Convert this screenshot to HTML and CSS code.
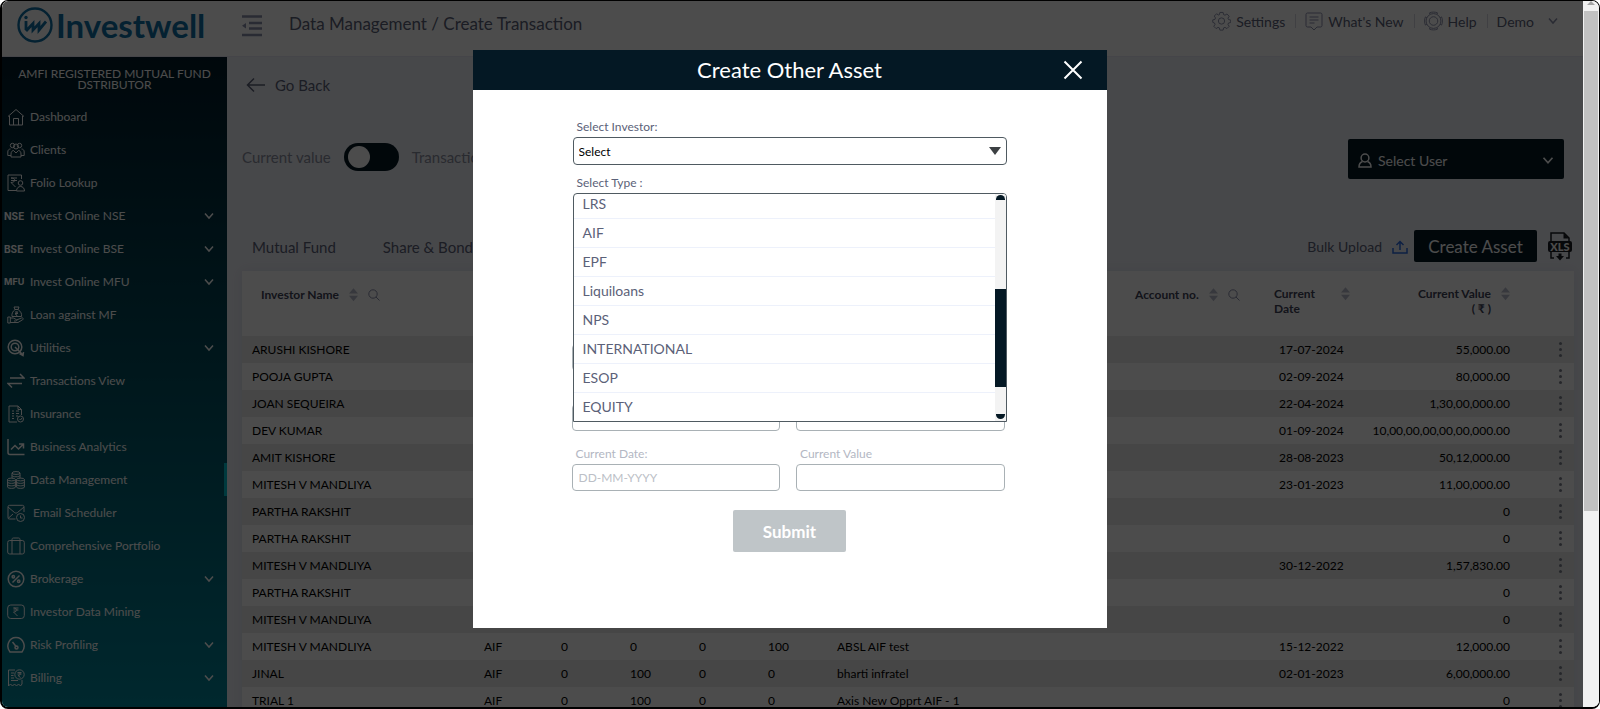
FILE: index.html
```html
<!DOCTYPE html>
<html lang="en">
<head>
    <meta charset="UTF-8">
    <meta name="viewport" content="width=device-width, initial-scale=1.0">
    <title>Investwell - Create Transaction</title>
    <link rel="stylesheet" href="styles.css">
</head>
<body>
    <!-- shared icon shapes -->
    <svg class="sprite" aria-hidden="true">
        <symbol id="chevron" viewBox="0 0 12 8"><path d="M2 1.500l4 4.500 4-4.500"/></symbol>
        <symbol id="search" viewBox="0 0 12 12"><circle cx="5" cy="5" r="4.200"/><path d="M8 8l3.500 3.500"/></symbol>
        <symbol id="sort" viewBox="0 0 10 16"><path d="M0 7L5 1l5 6zM0 9.500l5 6 5-6z"/></symbol>
    </svg>

    <div class="window">
        <div class="app">
            <header class="header">
                <a class="logo" href="#">
                    <svg width="38" height="38" viewBox="0 0 38 38" aria-hidden="true">
                        <circle cx="19" cy="19" r="16.500" stroke-width="2.400"/>
                        <path d="M10 15v9M10 25l7-7.500v6.500l6-6.500v6.500l7-8.500" stroke-width="2.800"/>
                        <circle class="dot" cx="10" cy="11.500" r="1.700"/>
                    </svg>
                    <span>Investwell</span>
                </a>
                <button class="menu-toggle" aria-label="Collapse menu">
                    <svg width="20" height="22" viewBox="0 0 20 22"><path d="M0 1.500h20M7 8h13M7 13.500h13M0 20h20" stroke-width="2.600"/><path class="fill" d="M0 10.700l4-2.700v5.400z"/></svg>
                </button>
                <h1>Data Management / Create Transaction</h1>
                <nav class="top-links">
                    <a href="#">
                        <svg width="19" height="20" viewBox="0 0 20 20"><path d="M8.300 1h3.400l.5 2.300 1.500.6 2-1.300 2.400 2.400-1.300 2 .6 1.500 2.300.5v2.600l-2.300.5-.6 1.500 1.300 2-2.400 2.400-2-1.300-1.500.6-.5 2.300H8.300l-.5-2.300-1.500-.6-2 1.300-2.400-2.400 1.300-2-.6-1.500L.8 11.400V8.800l2.300-.5.6-1.500-1.300-2 2.400-2.400 2 1.300 1-.4z"/><circle cx="10" cy="10" r="3.300"/></svg>
                        Settings
                    </a>
                    <a href="#">
                        <svg width="18" height="19" viewBox="0 0 18 19"><path d="M2.500 1h13A1.500 1.500 0 0 1 17 2.500v11a1.500 1.500 0 0 1-1.500 1.500H12l-3 3-3-3H2.500A1.500 1.500 0 0 1 1 13.500v-11A1.500 1.500 0 0 1 2.500 1zM4.500 5h9M4.500 8h9M4.500 11h5"/></svg>
                        What's New
                    </a>
                    <a href="#">
                        <svg width="19" height="20" viewBox="0 0 20 20"><circle cx="10" cy="10" r="7.800"/><circle cx="10" cy="10" r="4.500"/><path d="M6.500 3l-.8-1.500C8 .3 12 .3 14.300 1.500L13.500 3M17 6.500l1.500-.8c1.200 2.300 1.200 6.300 0 8.600l-1.500-.8M13.500 17l.8 1.500c-2.300 1.200-6.300 1.200-8.600 0l.8-1.500M3 13.500l-1.500.8C.3 12 .3 8 1.500 5.700L3 6.500"/></svg>
                        Help
                    </a>
                    <a href="#" class="account">
                        Demo
                        <svg width="12" height="8"><use href="#chevron"/></svg>
                    </a>
                </nav>
            </header>

            <div class="content">
                <aside class="sidebar">
                    <p class="broker">AMFI REGISTERED MUTUAL FUND DSTRIBUTOR</p>
                    <nav class="side-nav">
                        <a href="#">
                            <svg class="icon" viewBox="0 0 18 18"><path d="M1 8.500L9 1.500l8 7M2.500 8v9h13V8M6.500 17v-6.500h5V17"/></svg>
                            <span>Dashboard</span>
                        </a>
                        <a href="#">
                            <svg class="icon" viewBox="0 0 18 18"><circle cx="5.500" cy="4.500" r="2.200"/><circle cx="12.500" cy="4.500" r="2.200"/><circle cx="9" cy="5.500" r="2.500"/><path d="M4 16h10v-3c0-2.500-1.500-3.500-2.500-3.500L9 12 6.500 9.500C5.500 9.500 4 10.500 4 13zM4 14.500H.8V11c0-2 1.200-3 2.700-3M14 14.500h3.200V11c0-2-1.200-3-2.700-3"/></svg>
                            <span>Clients</span>
                        </a>
                        <a href="#">
                            <svg class="icon" viewBox="0 0 18 18"><path d="M14.500 5V1H1v15.500h8M4 4h6M4 6.500h6M4 4c5 0 5 4.500 0 4.500L8.500 13"/><circle cx="13.500" cy="9" r="2.300"/><path d="M9.500 17c0-6 8-6 8 0z"/></svg>
                            <span>Folio Lookup</span>
                        </a>
                        <a href="#">
                            <b class="mark">NSE</b>
                            <span>Invest Online NSE</span>
                            <svg class="chevron" width="12" height="8"><use href="#chevron"/></svg>
                        </a>
                        <a href="#">
                            <b class="mark">BSE</b>
                            <span>Invest Online BSE</span>
                            <svg class="chevron" width="12" height="8"><use href="#chevron"/></svg>
                        </a>
                        <a href="#">
                            <b class="mark small">MFU</b>
                            <span>Invest Online MFU</span>
                            <svg class="chevron" width="12" height="8"><use href="#chevron"/></svg>
                        </a>
                        <a href="#">
                            <svg class="icon" viewBox="0 0 18 18"><path d="M8 3.500L7 1h5l-1 2.500M8 3.500h3c3 2 4 4.500 3.500 7H5c-.5-2.500.5-5 3-7zM8 6h3M8 7.500h3M9 6c2 0 1.500 2.500-.5 2.500L10.500 10M.8 11h2.500v6H.8zM3.300 12h3l3 1.500c1 .5.500 1.500-.5 1.500H7M9.500 14l5-2c1.500-.5 2.500.8 1.200 1.700L11 16.500H3.300"/></svg>
                            <span>Loan against MF</span>
                        </a>
                        <a href="#">
                            <svg class="icon bold" viewBox="0 0 18 18"><circle cx="8" cy="8" r="6.800"/><circle cx="8" cy="8" r="3.800"/><path d="M8 8l8 8M12.500 14.500l3.500 2 .5-3.500"/></svg>
                            <span>Utilities</span>
                            <svg class="chevron" width="12" height="8"><use href="#chevron"/></svg>
                        </a>
                        <a href="#">
                            <svg class="icon bold" viewBox="0 0 18 18"><path d="M3 6h14l-4-4M15 11.500H1l4 4"/></svg>
                            <span>Transactions View</span>
                        </a>
                        <a href="#">
                            <svg class="icon" viewBox="0 0 18 18"><path d="M10 17H2V1h9l3.500 3.500V10M11 1v3.500h3.500M5 6h2M9 6h3M5 8.500h2M9 8.500h3M5 11h2M9 11h2M5 13.500h2"/><circle cx="13.500" cy="14" r="3"/><path d="M12.500 14l1 1 1.500-2"/></svg>
                            <span>Insurance</span>
                        </a>
                        <a href="#">
                            <svg class="icon bold" viewBox="0 0 18 18"><path d="M1 1v13.500c0 1.500.5 2 2 2h14.500M4 11.500l4-4 3.500 3.500L16 6.500M12 6h4.500v4.500"/></svg>
                            <span>Business Analytics</span>
                        </a>
                        <a href="#" class="active">
                            <svg class="icon" viewBox="0 0 18 18"><ellipse cx="9" cy="2" rx="4" ry="1.400"/><path d="M5 2v5.500M13 2v5.500M5 4.500c0 1.700 8 1.700 8 0"/><ellipse cx="4.500" cy="8.500" rx="3.900" ry="1.400"/><ellipse cx="13.500" cy="8.500" rx="3.900" ry="1.400"/><path d="M.6 8.500V16c0 1.800 7.800 1.800 7.800 0V8.500M.6 11c0 1.800 7.800 1.800 7.800 0M.6 13.500c0 1.800 7.800 1.800 7.800 0M9.600 8.500V16c0 1.800 7.800 1.800 7.800 0V8.500M9.600 11c0 1.800 7.800 1.800 7.800 0M9.600 13.500c0 1.800 7.800 1.800 7.800 0"/></svg>
                            <span>Data Management</span>
                        </a>
                        <a href="#">
                            <svg class="icon" viewBox="0 0 18 18"><path d="M8.500 15H2.500C1.300 15 1 14.500 1 13.500V3c0-1.200.5-1.700 1.700-1.700h12.600c1.200 0 1.700.5 1.700 1.700v5M1 3l6.500 5.500c1 .8 2 .8 3 0L17 3M1 14.500L6 10"/><circle cx="13.500" cy="13.500" r="4"/><path d="M13.500 11.500V14H15.500"/></svg>
                            <span class="indent">Email Scheduler</span>
                        </a>
                        <a href="#">
                            <svg class="icon" viewBox="0 0 18 18"><rect x=".7" y="3.500" width="16.600" height="13.500" rx="2"/><path d="M5 17V2.500C5 1.500 5.500 1 6.500 1h5c1 0 1.500.5 1.500 1.500V17"/></svg>
                            <span>Comprehensive Portfolio</span>
                        </a>
                        <a href="#">
                            <svg class="icon bold" viewBox="0 0 18 18"><circle cx="9" cy="9" r="7.800"/><circle cx="6.300" cy="6.800" r="1.200"/><circle cx="11.700" cy="11.200" r="1.200"/><path d="M12.500 5.500l-7 7"/></svg>
                            <span>Brokerage</span>
                            <svg class="chevron" width="12" height="8"><use href="#chevron"/></svg>
                        </a>
                        <a href="#">
                            <svg class="icon" viewBox="0 0 18 18"><rect x=".7" y="2" width="16.600" height="13.500" rx="3"/><path d="M6.500 5h5M6.500 7h5M6.500 5c4.500 0 4.500 4 0 4l4 4"/></svg>
                            <span>Investor Data Mining</span>
                        </a>
                        <a href="#">
                            <svg class="icon bold" viewBox="0 0 18 18"><path d="M3 16C-1.500 10.500 1.500 1.500 9 1.500S19.500 10.500 15 16zM5.500 6l4 5"/><circle cx="9.500" cy="11.500" r="1.500"/></svg>
                            <span>Risk Profiling</span>
                            <svg class="chevron" width="12" height="8"><use href="#chevron"/></svg>
                        </a>
                        <a href="#">
                            <svg class="icon" viewBox="0 0 18 18"><path d="M8 1H1.500v16l2-2 2 2 2-2 2 2 2-2 2 2 1.500-2v-4M4 4h3M4 6.500h2.500M4 9h3M4 11.500h7"/><circle cx="12.500" cy="5.500" r="4.700"/><path d="M10.500 3.500h4M10.500 5h4M11 3.500c3 0 3 3 0 3l2.500 2"/></svg>
                            <span>Billing</span>
                            <svg class="chevron" width="12" height="8"><use href="#chevron"/></svg>
                        </a>
                    </nav>
                </aside>

                <main class="main">
                    <a class="go-back" href="#">
                        <svg width="20" height="16" viewBox="0 0 20 16"><path d="M8 1.500L1.500 8 8 14.500M1.500 8H19"/></svg>
                        Go Back
                    </a>

                    <div class="toolbar">
                        <label class="switch">
                            <span>Current value</span>
                            <input type="checkbox">
                            <span>Transaction</span>
                        </label>
                        <button class="select-user">
                            <svg width="14" height="15" viewBox="0 0 14 15"><circle cx="7" cy="5" r="3.900"/><path d="M4.500 8.500C2 9.500 1 11.500 1 14h12c0-2.500-1-4.500-3.500-5.500"/></svg>
                            <span>Select User</span>
                            <svg width="14" height="9"><use href="#chevron"/></svg>
                        </button>
                    </div>

                    <div class="tabs">
                        <a href="#">Mutual Fund</a>
                        <a href="#">Share &amp; Bond</a>
                        <div class="actions">
                            <a class="bulk" href="#">
                                Bulk Upload
                                <svg width="16" height="14" viewBox="0 0 16 14"><path d="M1 8v5h14V8M8 10V1.500M4.500 5L8 1.500 11.500 5"/></svg>
                            </a>
                            <button class="create">Create Asset</button>
                            <button class="xls" aria-label="Export to Excel">
                                <svg width="24" height="29" viewBox="0 0 24 29">
                                    <path class="line" d="M3 9V1h13l5 5v3M3 20v6h3M21 20v6h-3"/>
                                    <path d="M15.500 1v5.500H21zM2 9h20q2 0 2 2v7q0 2-2 2H2q-2 0-2-2v-7q0-2 2-2zM10.500 21.500h3V24H16l-4 4.500L8 24h2.500z"/>
                                    <text x="12" y="18.500">XLS</text>
                                </svg>
                            </button>
                        </div>
                    </div>

                    <table class="assets">
                        <colgroup>
                            <col class="c-name"><col class="c-type"><col class="c-num"><col class="c-num"><col class="c-num"><col class="c-num"><col><col class="c-account"><col class="c-date"><col class="c-value"><col class="c-menu">
                        </colgroup>
                        <thead>
                            <tr>
                                <th><div class="th">Investor Name <svg class="sort"><use href="#sort"/></svg><svg class="search"><use href="#search"/></svg></div></th>
                                <th></th><th></th><th></th><th></th><th></th><th></th>
                                <th><div class="th first">Account no. <svg class="sort"><use href="#sort"/></svg><svg class="search"><use href="#search"/></svg></div></th>
                                <th><div class="th wide"><span>Current<br>Date</span><svg class="sort"><use href="#sort"/></svg></div></th>
                                <th><div class="th right"><span>Current Value<br>( ₹ )</span><svg class="sort"><use href="#sort"/></svg></div></th>
                                <th></th>
                            </tr>
                        </thead>
                        <tbody>
                            <tr><td>ARUSHI KISHORE</td><td></td><td></td><td></td><td></td><td></td><td></td><td></td><td class="date">17-07-2024</td><td class="value">55,000.00</td><td><button class="more" aria-label="More"></button></td></tr>
                            <tr><td>POOJA GUPTA</td><td></td><td></td><td></td><td></td><td></td><td></td><td></td><td class="date">02-09-2024</td><td class="value">80,000.00</td><td><button class="more" aria-label="More"></button></td></tr>
                            <tr><td>JOAN SEQUEIRA</td><td></td><td></td><td></td><td></td><td></td><td></td><td></td><td class="date">22-04-2024</td><td class="value">1,30,00,000.00</td><td><button class="more" aria-label="More"></button></td></tr>
                            <tr><td>DEV KUMAR</td><td></td><td></td><td></td><td></td><td></td><td></td><td></td><td class="date">01-09-2024</td><td class="value">10,00,00,00,00,00,000.00</td><td><button class="more" aria-label="More"></button></td></tr>
                            <tr><td>AMIT KISHORE</td><td></td><td></td><td></td><td></td><td></td><td></td><td></td><td class="date">28-08-2023</td><td class="value">50,12,000.00</td><td><button class="more" aria-label="More"></button></td></tr>
                            <tr><td>MITESH V MANDLIYA</td><td></td><td></td><td></td><td></td><td></td><td></td><td></td><td class="date">23-01-2023</td><td class="value">11,00,000.00</td><td><button class="more" aria-label="More"></button></td></tr>
                            <tr><td>PARTHA RAKSHIT</td><td></td><td></td><td></td><td></td><td></td><td></td><td></td><td class="date"></td><td class="value">0</td><td><button class="more" aria-label="More"></button></td></tr>
                            <tr><td>PARTHA RAKSHIT</td><td></td><td></td><td></td><td></td><td></td><td></td><td></td><td class="date"></td><td class="value">0</td><td><button class="more" aria-label="More"></button></td></tr>
                            <tr><td>MITESH V MANDLIYA</td><td></td><td></td><td></td><td></td><td></td><td></td><td></td><td class="date">30-12-2022</td><td class="value">1,57,830.00</td><td><button class="more" aria-label="More"></button></td></tr>
                            <tr><td>PARTHA RAKSHIT</td><td></td><td></td><td></td><td></td><td></td><td></td><td></td><td class="date"></td><td class="value">0</td><td><button class="more" aria-label="More"></button></td></tr>
                            <tr><td>MITESH V MANDLIYA</td><td></td><td></td><td></td><td></td><td></td><td></td><td></td><td class="date"></td><td class="value">0</td><td><button class="more" aria-label="More"></button></td></tr>
                            <tr><td>MITESH V MANDLIYA</td><td>AIF</td><td>0</td><td>0</td><td>0</td><td>100</td><td>ABSL AIF test</td><td></td><td class="date">15-12-2022</td><td class="value">12,000.00</td><td><button class="more" aria-label="More"></button></td></tr>
                            <tr><td>JINAL</td><td>AIF</td><td>0</td><td>100</td><td>0</td><td>0</td><td>bharti infratel</td><td></td><td class="date">02-01-2023</td><td class="value">6,00,000.00</td><td><button class="more" aria-label="More"></button></td></tr>
                            <tr><td>TRIAL 1</td><td>AIF</td><td>0</td><td>100</td><td>0</td><td>0</td><td>Axis New Opprt AIF - 1</td><td></td><td class="date"></td><td class="value">0</td><td><button class="more" aria-label="More"></button></td></tr>
                        </tbody>
                    </table>
                </main>
            </div>

            <div class="overlay">
                <div class="modal" role="dialog" aria-labelledby="modalTitle">
                    <div class="modal-header">
                        <h2 id="modalTitle">Create Other Asset</h2>
                        <button class="close" aria-label="Close">
                            <svg width="20" height="20" viewBox="0 0 20 20"><path d="M1.500 1.500l17 17M18.500 1.500l-17 17"/></svg>
                        </button>
                    </div>
                    <form class="modal-form">
                        <div class="group">
                            <label for="investor">Select Investor:</label>
                            <div class="select-box">
                                <select id="investor"><option>Select</option></select>
                            </div>
                        </div>
                        <div class="group">
                            <label id="typeLabel">Select Type :</label>
                            <div class="select-box">
                                <div class="dropdown">
                                    <ul role="listbox" aria-labelledby="typeLabel">
                                        <li role="option">LRS</li>
                                        <li role="option">AIF</li>
                                        <li role="option">EPF</li>
                                        <li role="option">Liquiloans</li>
                                        <li role="option">NPS</li>
                                        <li role="option">INTERNATIONAL</li>
                                        <li role="option">ESOP</li>
                                        <li role="option">EQUITY</li>
                                    </ul>
                                    <div class="list-scroll">
                                        <i class="arrow up"></i>
                                        <i class="thumb"></i>
                                        <i class="arrow down"></i>
                                    </div>
                                </div>
                            </div>
                        </div>

                        <div class="fields">
                            <div><label for="name"></label><input id="name" type="text" disabled></div>
                            <div><label for="account"></label><input id="account" type="text" disabled></div>
                            <div><label for="startDate"></label><input id="startDate" type="text" placeholder="DD-MM-YYYY" disabled></div>
                            <div><label for="startValue"></label><input id="startValue" type="text" disabled></div>
                            <div><label for="currentDate">Current Date:</label><input id="currentDate" type="text" placeholder="DD-MM-YYYY" disabled></div>
                            <div><label for="currentValue">Current Value</label><input id="currentValue" type="text" disabled></div>
                        </div>
                        <button class="submit" type="submit" disabled>Submit</button>
                    </form>
                </div>
            </div>
        </div>

        <div class="scrollbar" aria-hidden="true">
            <i class="cap"></i>
            <i class="track-thumb"></i>
        </div>
    </div>
</body>
</html>
```

FILE: styles.css
```css
* {
    box-sizing: border-box;
}
body {
    margin: 0;
    background-color: #ffffff;
    font-family: Lato, sans-serif;
    font-size: 14px;
    color: #5b6178;
}
a {
    color: inherit;
    text-decoration: none;
}
button, input, select {
    font-family: inherit;
}
button {
    border: none;
    padding: 0;
    background: none;
    color: inherit;
}
svg {
    fill: none;
    stroke: currentColor;
    flex: none;
}
.sprite {
    display: none;
}
.window {
    height: 100vh;
    display: flex;
    border: 1px solid #000000;
    border-left-width: 2px;
    border-bottom-width: 2px;
    border-radius: 8px;
    overflow: hidden;
}
.app {
    flex: 1;
    min-width: 0;
    position: relative;
    display: flex;
    flex-direction: column;
    overflow: hidden;
}

/* top bar */
.header {
    height: 56px;
    flex: none;
    display: flex;
    align-items: flex-start;
    background-color: #ffffff;
    border-bottom: 1px solid #e6e6f5;
}
.logo {
    width: 240px;
    padding: 5px 0 0 14px;
    display: flex;
    align-items: center;
    gap: 2px;
    color: #0e6fa6;
    font-size: 33px;
    font-weight: 700;
    line-height: 38px;
}
.logo .dot {
    fill: currentColor;
    stroke: none;
}
.menu-toggle {
    margin-top: 14px;
    color: #8b8fab;
}
.menu-toggle .fill {
    fill: currentColor;
    stroke: none;
}
.header h1 {
    margin: 0 0 0 27px;
    font-size: 17px;
    font-weight: 400;
    line-height: 46px;
}
.top-links {
    margin-left: auto;
    padding: 10px 24px 0 0;
    display: flex;
}
.top-links a {
    display: flex;
    align-items: center;
    gap: 5px;
    height: 20px;
    padding: 0 10px 0 10px;
    font-size: 14px;
}
.top-links a + a {
    background: linear-gradient(#d5d7e2, #d5d7e2) left center / 1px 14px no-repeat;
}
.top-links svg {
    color: #8b8fab;
}
.top-links .account {
    gap: 13px;
    padding: 0 0 0 10px;
}
.top-links .account svg {
    stroke-width: 1.500;
}

/* sidebar */
.content {
    flex: 1;
    min-height: 0;
    display: flex;
}
.sidebar {
    width: 225px;
    flex: none;
    background: linear-gradient(#001a28, #00869a);
    color: #ffffff;
}
.broker {
    margin: 0;
    padding: 11px 15px 10px;
    font-size: 12px;
    line-height: 11px;
    text-align: center;
}
.side-nav a {
    display: flex;
    align-items: center;
    height: 33px;
    padding-left: 4px;
    font-size: 12px;
}
.side-nav a.active {
    border-right: 3px solid #00c2d1;
}
.side-nav .icon {
    width: 18px;
    height: 18px;
    margin: 0 5px 0 1px;
}
.side-nav .icon.bold {
    stroke-width: 1.500;
}
.side-nav .mark {
    width: 24px;
    margin-left: -2px;
    margin-right: 2px;
    font-family: Inter, sans-serif;
    font-size: 10px;
}
.side-nav .mark.small {
    font-size: 9px;
}
.side-nav .indent {
    margin-left: 3px;
}
.side-nav .chevron {
    margin: 0 12px 0 auto;
    stroke-width: 1.500;
}

/* page */
.main {
    flex: 1;
    min-width: 0;
    padding: 16px 9px 0 15px;
    background-color: #eff1f8;
}
.go-back {
    display: flex;
    align-items: center;
    gap: 9px;
    height: 24px;
    padding-left: 4px;
    font-size: 15px;
}
.go-back svg {
    stroke-width: 1.500;
}
.toolbar {
    display: flex;
    align-items: flex-start;
    justify-content: space-between;
    height: 40px;
    margin-top: 42px;
    padding-right: 10px;
}
.switch {
    display: flex;
    align-items: center;
    gap: 13px;
    padding-top: 4px;
    color: #8b8fa0;
    font-size: 15px;
}
.switch input {
    appearance: none;
    width: 55px;
    height: 28px;
    margin: 0;
    padding: 3px 4px;
    border-radius: 14px;
    background-color: #041824;
}
.switch input::before {
    content: "";
    display: block;
    width: 22px;
    height: 22px;
    border-radius: 50%;
    background-color: #ffffff;
}
.select-user {
    display: flex;
    align-items: center;
    gap: 6px;
    width: 216px;
    height: 40px;
    padding: 2px 9px 0 10px;
    border-radius: 2px;
    background-color: #041824;
    color: #ffffff;
    font-size: 14px;
}
.select-user span {
    margin-right: auto;
}
.select-user svg {
    stroke-width: 1.500;
}
.tabs {
    display: flex;
    align-items: center;
    gap: 47px;
    height: 32px;
    margin: 51px 0 9px;
    padding-left: 10px;
    font-size: 15px;
    line-height: 20px;
}
.tabs > a, .bulk {
    padding-top: 2px;
}
.actions {
    display: flex;
    align-items: center;
    margin-left: auto;
}
.bulk {
    display: flex;
    align-items: center;
    gap: 10px;
    margin-right: 6px;
    font-size: 14px;
}
.bulk svg {
    color: #2d6be0;
    stroke-width: 1.500;
}
.create {
    width: 123px;
    height: 32px;
    border-radius: 2px;
    background-color: #041824;
    color: #ffffff;
    font-size: 17px;
}
.xls {
    width: 24px;
    height: 29px;
    margin: 0 2px 0 11px;
    color: #1a1c22;
}
.xls path {
    fill: currentColor;
    stroke: none;
}
.xls .line {
    fill: none;
    stroke: currentColor;
    stroke-width: 1.500;
}
.xls text {
    fill: #ffffff;
    stroke: none;
    font-size: 11px;
    font-weight: 900;
    text-anchor: middle;
}

/* assets table */
.assets {
    width: 100%;
    table-layout: fixed;
    border-collapse: collapse;
    background-color: #ffffff;
    box-shadow: 0 0 12px #dcdfec;
    color: #000000;
    font-size: 12px;
}
.c-name {
    width: 232px;
}
.c-type {
    width: 77px;
}
.c-num {
    width: 69px;
}
.c-account {
    width: 139px;
}
.c-date {
    width: 98px;
}
.c-value {
    width: 158px;
}
.c-menu {
    width: 54px;
}
.assets th {
    height: 65px;
    padding: 15px 0 0 10px;
    vertical-align: top;
    text-align: left;
    color: #3f4358;
    font-size: 12px;
    font-weight: 700;
    line-height: 15px;
}
.th {
    display: flex;
    align-items: center;
    gap: 10px;
    padding: 1px 0 0 9px;
}
.th.first {
    padding-left: 0;
}
.th.wide {
    align-items: flex-start;
    justify-content: space-between;
    padding: 0 12px 0 0;
}
.th.right {
    align-items: flex-start;
    justify-content: flex-end;
    padding: 0 10px 0 0;
    text-align: right;
}
.sort {
    width: 9px;
    height: 15px;
    fill: #b9bdcc;
    stroke: none;
}
.search {
    width: 12px;
    height: 12px;
    color: #8b8fab;
}
.assets td {
    height: 27px;
    padding: 0 0 0 10px;
    white-space: nowrap;
}
.assets tbody tr:nth-child(odd) {
    background-color: #e9e9e9;
}
.assets .date {
    padding-left: 15px;
}
.assets .value {
    padding: 0 10px 0 0;
    text-align: right;
}
.more {
    display: block;
    width: 3px;
    height: 3px;
    margin-left: 29px;
    border-radius: 50%;
    background-color: #7d818e;
    box-shadow: 0 -6px #7d818e, 0 6px #7d818e;
}

/* dialog */
.overlay {
    position: absolute;
    inset: 0;
    display: flex;
    justify-content: center;
    align-items: flex-start;
    padding: 49px 6px 0 0;
    background-color: rgba(0, 0, 0, 0.7);
}
.modal {
    width: 634px;
    background-color: #ffffff;
}
.modal-header {
    display: flex;
    align-items: center;
    height: 40px;
    padding: 0 24px 0 44px;
    background-color: #041824;
    color: #ffffff;
}
.modal-header h2 {
    flex: 1;
    margin: 0;
    padding-bottom: 2px;
    font-size: 22px;
    font-weight: 400;
    text-align: center;
}
.close svg {
    display: block;
    stroke-width: 2;
}
.modal-form {
    display: flex;
    flex-direction: column;
    padding: 28px 100px 76px;
}
.modal-form label {
    display: block;
    height: 18px;
    margin-bottom: 1px;
    padding-left: 4px;
    font-size: 12px;
    line-height: 18px;
}
.group {
    margin-bottom: 9px;
}
.select-box {
    position: relative;
    height: 28px;
}
.select-box select {
    appearance: none;
    width: 100%;
    height: 28px;
    padding: 0 5px;
    border: 1px solid #4f5a61;
    border-radius: 4px;
    background-color: #ffffff;
    color: #000000;
    font-size: 12px;
}
.select-box:has(select)::after {
    content: "";
    position: absolute;
    right: 6px;
    top: 10px;
    border: 6px solid transparent;
    border-top: 8px solid #3c4043;
    border-bottom: none;
}
.dropdown {
    position: absolute;
    left: 0;
    right: 0;
    top: 0;
    height: 229px;
    display: flex;
    border: 1px solid #4f5a61;
    border-radius: 4px 4px 0 0;
    background-color: #ffffff;
    overflow: hidden;
}
.dropdown ul {
    flex: 1;
    margin: 0;
    padding: 0;
    display: flex;
    flex-direction: column;
    justify-content: flex-end;
    list-style: none;
}
.dropdown li {
    flex: none;
    height: 29px;
    padding-left: 9px;
    border-top: 1px solid #edf1fb;
    font-size: 14px;
    line-height: 27px;
}
.list-scroll {
    width: 11px;
    display: flex;
    flex-direction: column;
    background-color: #f3f3f3;
}
.list-scroll .thumb {
    height: 98px;
    margin: 89px 0 auto;
    background-color: #041824;
}
.arrow {
    width: 9px;
    height: 5px;
    margin: 1px 1px 0;
    background-color: #041824;
}
.arrow.up {
    border-radius: 5px 5px 0 0;
}
.arrow.down {
    margin: 0 1px 2px;
    border-radius: 0 0 5px 5px;
}
.fields {
    display: grid;
    grid-template-columns: 1fr 1fr;
    gap: 14px 16px;
    margin: 95px 2px 0 -1px;
    color: #b3b7c3;
}
.fields input {
    display: block;
    width: 100%;
    height: 27px;
    padding: 0 6px;
    border: 1px solid #a9b1b5;
    border-radius: 4px;
    background-color: #ffffff;
    font-size: 12px;
}
.fields input::placeholder {
    color: #bcbfc7;
}
.submit {
    align-self: center;
    width: 113px;
    height: 42px;
    margin-top: 19px;
    border-radius: 2px;
    background-color: #bfc5c8;
    color: #ffffff;
    font-size: 17px;
    font-weight: 700;
}

/* window scroll bar */
.scrollbar {
    width: 16px;
    flex: none;
    background-color: #f1f1f1;
    display: flex;
    flex-direction: column;
}
.cap {
    height: 10px;
    display: flex;
    justify-content: center;
}
.cap::before {
    content: "";
    border: 4px solid transparent;
    border-top: none;
    border-bottom: 4px solid #a3a3a3;
    height: 0;
}
.track-thumb {
    height: 500px;
    margin: 0 1px;
    background-color: #c1c1c1;
}
```
